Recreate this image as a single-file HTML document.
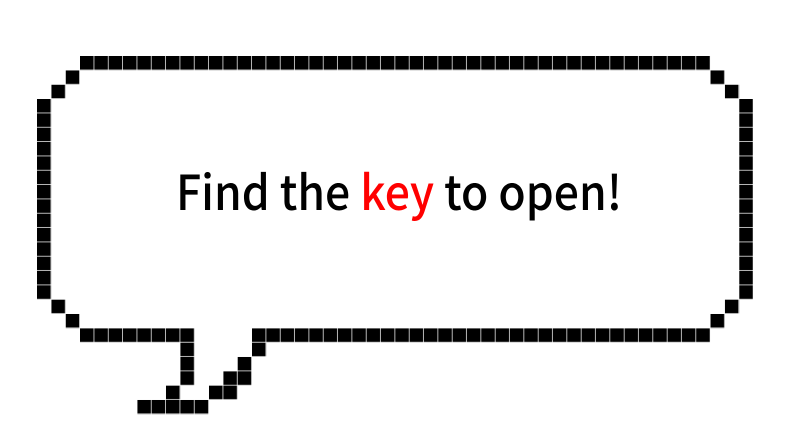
<!DOCTYPE html>
<html><head><meta charset="utf-8"><style>html,body{margin:0;padding:0;background:#fff;width:800px;height:424px;overflow:hidden}</style></head>
<body>
<svg width="800" height="424" viewBox="0 0 800 424" xmlns="http://www.w3.org/2000/svg">
<defs><pattern id="p" width="1" height="1" patternUnits="userSpaceOnUse"><rect x="0" y="0" width="0.95" height="0.95" fill="#000"/></pattern></defs>
<g transform="translate(37,56) scale(14.33)" fill="url(#p)">
<rect x="3" y="0" width="44" height="1"/>
<rect x="2" y="1" width="1" height="1"/><rect x="47" y="1" width="1" height="1"/>
<rect x="1" y="2" width="1" height="1"/><rect x="48" y="2" width="1" height="1"/>
<rect x="0" y="3" width="1" height="14"/><rect x="49" y="3" width="1" height="14"/>
<rect x="1" y="17" width="1" height="1"/><rect x="48" y="17" width="1" height="1"/>
<rect x="2" y="18" width="1" height="1"/><rect x="47" y="18" width="1" height="1"/>
<rect x="3" y="19" width="8" height="1"/><rect x="15" y="19" width="32" height="1"/>
<rect x="10" y="20" width="1" height="3"/>
<rect x="15" y="20" width="1" height="1"/>
<rect x="14" y="21" width="1" height="2"/>
<rect x="13" y="22" width="1" height="2"/>
<rect x="9" y="23" width="1" height="1"/><rect x="12" y="23" width="1" height="1"/>
<rect x="7" y="24" width="5" height="1"/>
</g>
<text x="176" y="210" font-family="Noto Sans CJK JP, Liberation Sans, sans-serif" font-size="48" font-weight="500" textLength="446" lengthAdjust="spacingAndGlyphs" fill="#000">Find the <tspan fill="#ff0000">key</tspan> to open!</text>
</svg>
</body></html>
